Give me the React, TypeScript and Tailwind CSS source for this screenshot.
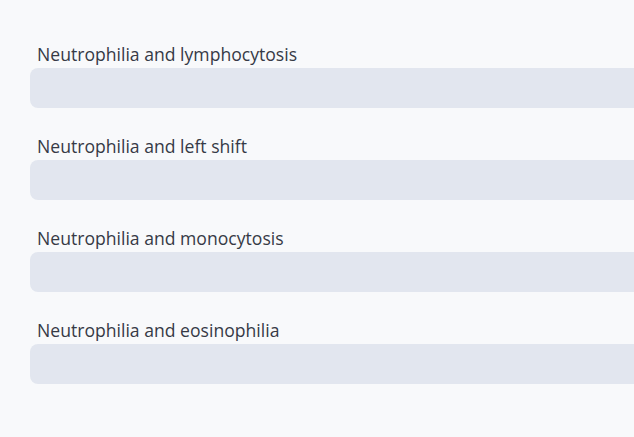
export default function App() {
  const items = [
    "Neutrophilia and lymphocytosis",
    "Neutrophilia and left shift",
    "Neutrophilia and monocytosis",
    "Neutrophilia and eosinophilia",
  ];
  return (
    <div className="w-[634px] h-[437px] overflow-hidden bg-[#f8f9fb] pt-[42px] pl-[30px]" style={{ fontFamily: '"Open Sans", sans-serif' }}>
      <div className="flex flex-col gap-[26px] w-[640px]">
        {items.map((t) => (
          <div key={t} className="flex flex-col">
            <div className="pl-[7px] h-[26px] text-[17.6px] leading-[24px] text-[#363a46]">{t}</div>
            <div className="h-[40px] rounded-[8px] bg-[#e2e6ef]" />
          </div>
        ))}
      </div>
    </div>
  );
}
